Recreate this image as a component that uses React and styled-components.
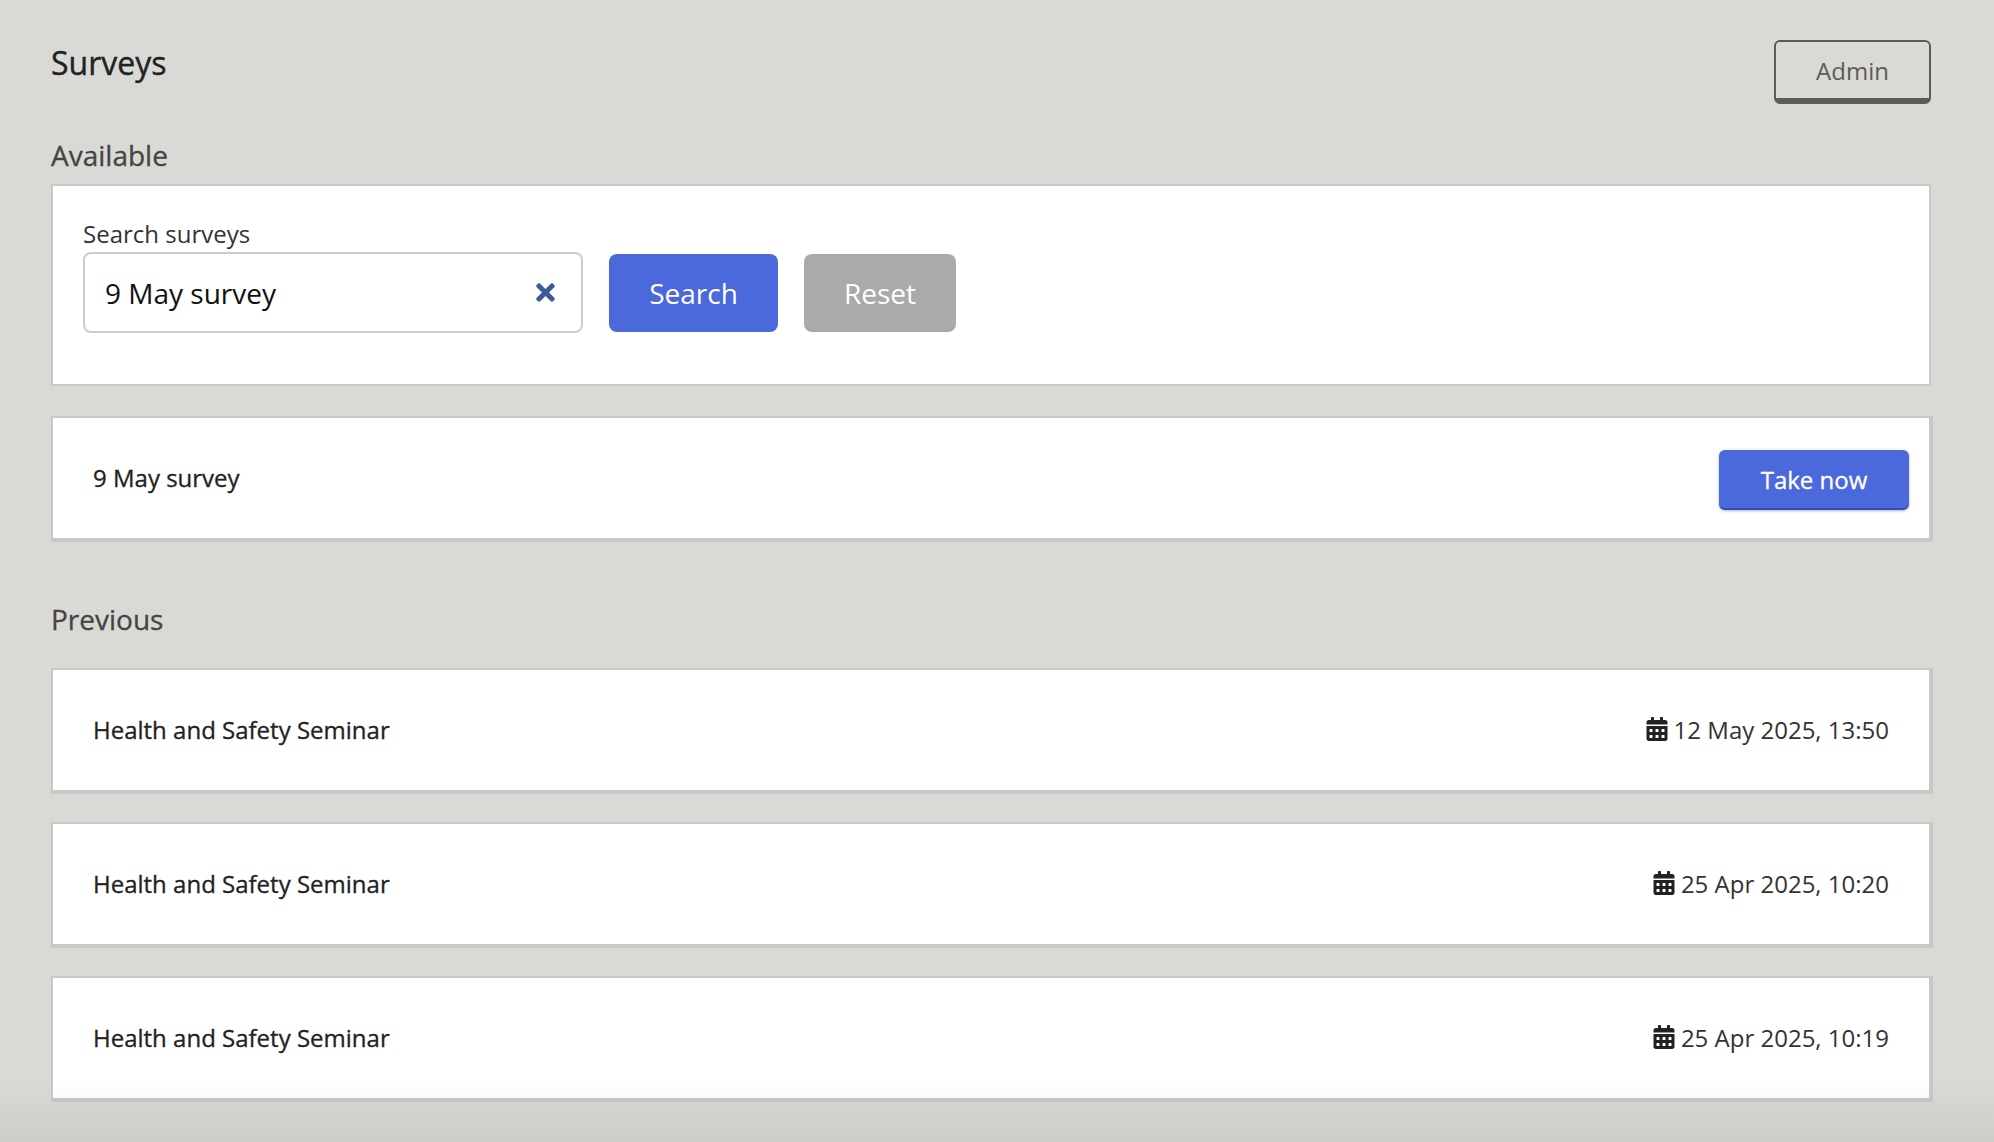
import React from "react";
import styled, { createGlobalStyle } from "styled-components";
import { FaCalendarAlt, FaTimes } from "react-icons/fa";

const GlobalStyle = createGlobalStyle`
    html, body {
        margin: 0;
        padding: 0;
        background-color: #d9dad5;
        font-family: "Open Sans", "Noto Sans", sans-serif;
        color: #222;
    }
    * {
        box-sizing: border-box;
    }
`;

const Page = styled.div`
    position: relative;
    height: 1142px;
    overflow: hidden;
    padding: 40px 61px 0 51px;
`;

const BottomFade = styled.div`
    position: absolute;
    left: 0;
    right: 0;
    bottom: 0;
    height: 60px;
    background: linear-gradient(rgba(0, 0, 0, 0), rgba(0, 0, 0, 0.06));
    pointer-events: none;
`;

const Header = styled.header`
    display: flex;
    justify-content: space-between;
    align-items: flex-start;
    height: 64px;
`;

const Title = styled.h1`
    margin: 0;
    font-size: 32px;
    line-height: 45px;
    font-weight: 500;
    -webkit-text-stroke: 0.4px #222;
    color: #222;
`;

const AdminButton = styled.button`
    width: 157px;
    height: 64px;
    margin-right: 2px;
    padding: 0;
    background: transparent;
    border: 2px solid #5c5c54;
    border-bottom-width: 6px;
    border-radius: 6px;
    font: 400 24px "Open Sans", sans-serif;
    color: #5c5c54;
`;

const SectionTitle = styled.h2`
    margin: ${({$top}) => $top}px 0 ${({$bottom}) => $bottom}px;
    font-size: 28px;
    line-height: 40px;
    font-weight: 500;
    -webkit-text-stroke: 0.3px #444;
    color: #444;
`;

const SearchCard = styled.section`
    height: 202px;
    margin-right: 2px;
    padding: 32px 30px 0;
    background-color: #fff;
    border: 2px solid #c8c8c6;
`;

const SearchLabel = styled.label`
    display: block;
    height: 34px;
    font-size: 24px;
    line-height: 32px;
    color: #333;
`;

const SearchRow = styled.div`
    display: flex;
    align-items: center;
    gap: 26px;
`;

const InputBox = styled.div`
    display: flex;
    align-items: center;
    justify-content: space-between;
    width: 500px;
    height: 81px;
    padding: 0 22px 0 20px;
    border: 2px solid #ccc;
    border-radius: 8px;
    font-size: 28px;
    color: #111;
    svg {
        color: #3b5a96;
        font-size: 27px;
    }
`;

const FormButton = styled.button`
    width: ${({$width}) => $width}px;
    height: 78px;
    border: none;
    border-radius: 8px;
    background-color: ${({$bg}) => $bg};
    color: #fff;
    font: 400 28px "Open Sans", sans-serif;
`;

const RowList = styled.div`
    display: flex;
    flex-direction: column;
    gap: 28px;
`;

const Row = styled.div`
    display: flex;
    justify-content: space-between;
    align-items: center;
    height: 126px;
    margin-top: ${({$top}) => $top || 0}px;
    padding: 0 ${({$right}) => $right}px 2px 40px;
    background-color: #fff;
    border: solid #c8c8c6;
    border-width: 2px 4px 4px 2px;
`;

const RowTitle = styled.span`
    font-size: 24px;
    font-weight: 500;
    -webkit-text-stroke: 0.3px #222;
    color: #222;
`;

const TakeButton = styled.button`
    width: 190px;
    height: 60px;
    margin-top: 6px;
    border: none;
    border-bottom: 2px solid #2f4cc4;
    border-radius: 6px;
    background-color: #4b69db;
    box-shadow: 0 1px 3px rgba(0, 0, 0, 0.3);
    color: #fff;
    font: 500 24px "Open Sans", sans-serif;
    -webkit-text-stroke: 0.3px #fff;
`;

const DateText = styled.span`
    display: flex;
    align-items: center;
    gap: 5px;
    font-size: 24px;
    color: #333;
    svg {
        font-size: 24px;
        color: #222;
    }
`;

const previous = [
    {id: 1, date: "12 May 2025, 13:50"},
    {id: 2, date: "25 Apr 2025, 10:20"},
    {id: 3, date: "25 Apr 2025, 10:19"},
];

const App = () => (
    <Page>
        <GlobalStyle />
        <Header>
            <Title>Surveys</Title>
            <AdminButton>Admin</AdminButton>
        </Header>
        <SectionTitle $top={31} $bottom={9}>Available</SectionTitle>
        <SearchCard>
            <SearchLabel>Search surveys</SearchLabel>
            <SearchRow>
                <InputBox>
                    9 May survey
                    <FaTimes />
                </InputBox>
                <FormButton $width={169} $bg="#4b69db">Search</FormButton>
                <FormButton $width={152} $bg="#aaaaaa">Reset</FormButton>
            </SearchRow>
        </SearchCard>
        <Row $top={30} $right={20}>
            <RowTitle>9 May survey</RowTitle>
            <TakeButton>Take now</TakeButton>
        </Row>
        <SectionTitle $top={57} $bottom={29}>Previous</SectionTitle>
        <RowList>
            {previous.map(({id, date}) => (
                <Row key={id} $right={40}>
                    <RowTitle>Health and Safety Seminar</RowTitle>
                    <DateText><FaCalendarAlt />{date}</DateText>
                </Row>
            ))}
        </RowList>
        <BottomFade />
    </Page>
);

export default App;
